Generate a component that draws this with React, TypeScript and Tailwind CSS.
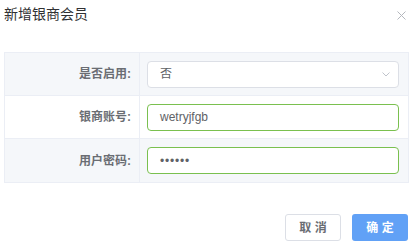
import React from "react";

const font = { fontFamily: '"Liberation Sans", "Noto Sans CJK SC", sans-serif' };

function Row({ label, shaded, children }: { label: string; shaded: boolean; children: React.ReactNode }) {
  return (
    <div className={`flex h-[43px] border-b border-[#ebeef5] last:border-b-0 ${shaded ? "bg-[#f5f7fa]" : "bg-white"}`}>
      <div className="w-[135px] shrink-0 border-r border-[#ebeef5] flex items-center justify-end pr-[8px] text-[12px] font-semibold text-[#6a6d73]">
        {label}
      </div>
      <div className="flex-1 flex items-center pl-[7px] pr-[9px]">{children}</div>
    </div>
  );
}

export default function App() {
  return (
    <div className="w-[413px] h-[244px] bg-white" style={font}>
      <div className="h-[52px] flex justify-between items-start px-[4px] pt-[4px]">
        <div className="text-[14px] leading-[20px] text-[#303133]">新增银商会员</div>
        <svg width="9" height="9" viewBox="0 0 9 9" className="mt-[7px] mr-[3px]">
          <path d="M0.5 0.5 L8.5 8.5 M8.5 0.5 L0.5 8.5" stroke="#b4b7bd" strokeWidth="1" fill="none" />
        </svg>
      </div>
      <div className="mx-[4px] border border-[#ebeef5] flex flex-col">
        <Row label="是否启用:" shaded>
          <div className="w-full h-[27px] rounded-[4px] border border-[#dcdfe6] bg-white flex items-center justify-between pl-[12px] pr-[8px] text-[12px] text-[#606266]">
            <span>否</span>
            <svg width="8" height="5" viewBox="0 0 8 5">
              <path d="M0.5 0.5 L4 4 L7.5 0.5" stroke="#c0c4cc" strokeWidth="1" fill="none" />
            </svg>
          </div>
        </Row>
        <Row label="银商账号:" shaded={false}>
          <div className="w-full h-[27px] rounded-[4px] border border-[#7ac04f] bg-white flex items-center pl-[12px] text-[12px] text-[#606266]">
            wetryjfgb
          </div>
        </Row>
        <Row label="用户密码:" shaded>
          <div className="w-full h-[27px] rounded-[4px] border border-[#7ac04f] bg-white flex items-center pl-[12px] text-[12px] text-[#606266] tracking-[0.8px]">
            ••••••
          </div>
        </Row>
      </div>
      <div className="flex justify-end gap-[11px] pr-[5px] mt-[31px]">
        <button className="w-[56px] h-[27px] rounded-[3px] border border-[#dcdfe6] bg-white text-[12px] text-[#6a6d73] font-semibold">
          取 消
        </button>
        <button className="w-[56px] h-[27px] rounded-[3px] bg-[#61a1f6] text-[12px] text-white font-semibold">
          确 定
        </button>
      </div>
    </div>
  );
}
